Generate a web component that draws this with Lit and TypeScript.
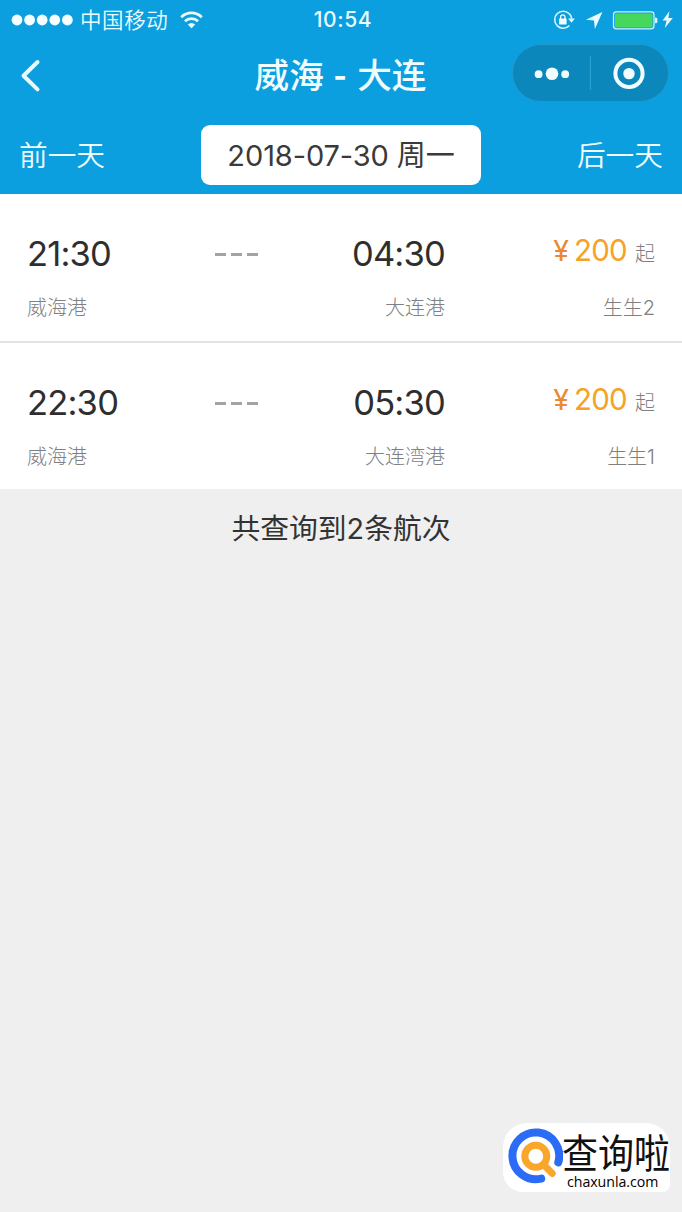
import { LitElement, html, svg, css } from "lit";
import { customElement, property } from "lit/decorators.js";

interface Sailing {
  depart: string;
  arrive: string;
  from: string;
  to: string;
  price: string;
  ship: string;
}

const sailings: Sailing[] = [
  { depart: "21:30", arrive: "04:30", from: "威海港", to: "大连港", price: "200", ship: "生生2" },
  { depart: "22:30", arrive: "05:30", from: "威海港", to: "大连湾港", price: "200", ship: "生生1" },
];

function dot(cx: number) {
  return svg`<circle cx=${cx} cy="6" r="5.4" />`;
}

@customElement("status-bar")
class StatusBar extends LitElement {
  static styles = css`
    :host {
      display: grid;
      grid-template-columns: 1fr auto 1fr;
      align-items: center;
      height: 38px;
      padding: 0 7px 0 11px;
      color: #eafcff;
    }
    .left,
    .right {
      display: flex;
      align-items: center;
    }
    .right {
      justify-content: flex-end;
    }
    .carrier {
      font-size: 21.5px;
      font-weight: 350;
      line-height: 38px;
      margin: 0 12px 0 7px;
      letter-spacing: 0.6px;
    }
    .clock {
      font-size: 21px;
      font-weight: 500;
      line-height: 38px;
      padding-top: 1px;
      letter-spacing: 0.6px;
    }
    svg {
      display: block;
    }
  `;

  render() {
    return html`
      <div class="left">
        <svg width="62" height="12" viewBox="0 0 62 12" fill="#f4feff">
          ${[0, 1, 2, 3, 4].map((i) => dot(6 + i * 12.6))}
        </svg>
        <span class="carrier">中国移动</span>
        <svg width="23" height="18" viewBox="0 0 23 18" fill="none" stroke="#eafcff" stroke-width="2.7">
          <path d="M1.2 6.2a14.6 14.6 0 0 1 20.6 0" />
          <path d="M5 10.3a9.2 9.2 0 0 1 13 0" />
          <path d="M11.5 17.3 7.8 13.6a5.3 5.3 0 0 1 7.4 0z" fill="#eafcff" stroke="none" />
        </svg>
      </div>
      <div class="clock">10:54</div>
      <div class="right">
        <svg width="122" height="24" viewBox="553 6.5 122 24">
          <path d="M569.2 12.2A8.5 8.5 0 1 0 569.4 24" fill="none" stroke="#d9f6ff" stroke-width="1.6" />
          <path d="M569.2 12.2a8.6 8.6 0 0 1 2.6 5" fill="none" stroke="#d9f6ff" stroke-width="1.6" />
          <path d="M568 17h7l-3.5 4.2z" fill="#d9f6ff" />
          <rect x="559" y="16.9" width="7.6" height="6" rx=".6" fill="#f4feff" />
          <path d="M560.6 17.4v-1.8a2.2 2.2 0 0 1 4.4 0v1.8" fill="none" stroke="#f4feff" stroke-width="1.3" />
          <path d="M602.4 10.4 586 18.2l8 .7.9 8.6z" fill="#eafcff" />
          <rect x="613.5" y="10.4" width="40.5" height="17" rx="2.8" fill="none" stroke="#d0f2ff" stroke-width="1.3" />
          <rect x="615" y="11.9" width="37.5" height="14" rx="1.4" fill="#45d85c" />
          <path d="M655 16h.8q1.6 0 1.6 1.6v2.6q0 1.6-1.6 1.6h-.8z" fill="#d0f2ff" />
          <path d="M669.4 9.8 662.6 19h4l-1.8 7.6 8-10h-4.4z" fill="#eafcff" />
        </svg>
      </div>
    `;
  }
}

@customElement("sailing-row")
class SailingRow extends LitElement {
  @property({ attribute: false }) sailing!: Sailing;

  static styles = css`
    :host {
      display: grid;
      grid-template-columns: 112px 1fr 112px 210px;
      grid-template-rows: 42px 30px;
      row-gap: 18px;
      box-sizing: border-box;
      padding: 39px 27px 0 27px;
      background: #fff;
    }
    .time {
      font-size: 34.5px;
      line-height: 42px;
      color: #2e2e2e;
      white-space: nowrap;
      letter-spacing: -0.8px;
    }
    .end {
      text-align: right;
    }
    .dash {
      display: flex;
      align-items: center;
      gap: 4.8px;
      padding: 1px 0 0 76px;
    }
    .dash i {
      width: 11.3px;
      height: 3px;
      background: #a3a3a3;
    }
    .price {
      display: flex;
      justify-content: flex-end;
      align-items: baseline;
      line-height: 34px;
      white-space: nowrap;
    }
    .yen {
      font-size: 28.5px;
      font-weight: 400;
      color: #ec8732;
      margin-right: 5px;
    }
    .amount {
      font-size: 29.5px;
      color: #f5a327;
      margin-right: 8px;
      letter-spacing: -0.7px;
    }
    .unit,
    .name {
      font-size: 20px;
      font-weight: 300;
      color: #808080;
    }
    .name {
      line-height: 30px;
    }
    .wide {
      grid-column: span 2;
    }
  `;

  render() {
    const s = this.sailing;
    return html`
      <div class="time">${s.depart}</div>
      <div class="dash"><i></i><i></i><i></i></div>
      <div class="time end">${s.arrive}</div>
      <div class="price">
        <span class="yen">¥</span><span class="amount">${s.price}</span><span class="unit">起</span>
      </div>
      <div class="name">${s.from}</div>
      <div class="name end wide">${s.to}</div>
      <div class="name end">${s.ship}</div>
    `;
  }
}

@customElement("app-root")
class AppRoot extends LitElement {
  static styles = css`
    :host {
      display: flex;
      flex-direction: column;
      position: relative;
      box-sizing: border-box;
      width: 682px;
      height: 1212px;
      overflow: hidden;
      background: #efefef;
      font-family: Inter, "Noto Sans CJK SC", sans-serif;
      color: #333;
    }
    .header {
      height: 194px;
      background: #0b9fdf;
      color: #f0fdff;
    }
    .nav {
      display: grid;
      grid-template-columns: 1fr auto 1fr;
      align-items: center;
      height: 72px;
      padding: 0 13px;
    }
    .back {
      margin: 2px 0 0 6px;
    }
    .title {
      font-size: 34.6px;
      font-weight: 500;
      line-height: 70px;
      margin: 2px 1px 0 0;
      white-space: nowrap;
      word-spacing: -0.5px;
    }
    .hyphen {
      display: inline-block;
      font-weight: 600;
      transform: scaleX(0.85);
    }
    .capsule {
      display: flex;
      align-items: center;
      justify-self: end;
      box-sizing: border-box;
      width: 157px;
      height: 58px;
      margin-top: -2px;
      border: 1.5px solid #2298cb;
      border-radius: 29px;
      background: #0c87bb;
    }
    .days {
      display: grid;
      grid-template-columns: 1fr 280px 1fr;
      align-items: center;
      margin-top: 15px;
      padding: 0 19px;
      font-size: 28.7px;
      font-weight: 350;
      line-height: 58px;
    }
    .next {
      text-align: right;
    }
    .side {
      padding-top: 2px;
    }
    .date {
      height: 60px;
      border-radius: 9px;
      background: #fff;
      color: #3a3a3a;
      font-size: 29px;
      font-weight: 400;
      line-height: 62px;
      text-align: center;
      white-space: nowrap;
      letter-spacing: -0.1px;
    }
    .first {
      height: 149px;
      border-bottom: 2px solid #e2e2e2;
    }
    .second {
      height: 146px;
    }
    .summary {
      padding-top: 19px;
      font-size: 28.8px;
      line-height: 42px;
      text-align: center;
      color: #333;
    }
    .mark {
      position: absolute;
      right: 12px;
      bottom: 20px;
      display: flex;
      width: 167px;
      height: 69px;
      border-radius: 24px 24px 8px 20px;
      background: #fff;
      color: #111;
    }
    .words {
      display: flex;
      flex-direction: column;
      margin-left: -1px;
    }
    .brand {
      height: 50px;
      font-size: 36px;
      line-height: 65px;
      transform: scaleY(1.1);
      transform-origin: 50% 100%;
      white-space: nowrap;
    }
    .site {
      padding: 1px 0 0 5px;
      font-family: "Open Sans", sans-serif;
      font-size: 14.2px;
      font-weight: 500;
      line-height: 16px;
      letter-spacing: -0.05px;
      color: #000;
    }
  `;

  render() {
    return html`
      <div class="header">
        <status-bar></status-bar>
        <div class="nav">
          <svg class="back" width="22" height="36" viewBox="0 0 22 36" fill="none" stroke="#e8fbff" stroke-width="4" stroke-linecap="round" stroke-linejoin="round">
            <path d="M18.5 5 4.5 18.7 18.5 32.4" />
          </svg>
          <div class="title">威海 <span class="hyphen">-</span> 大连</div>
          <div class="capsule">
            <svg width="154" height="55" viewBox="0 0 154 55" fill="#f0fdff">
              <circle cx="25.6" cy="28.2" r="3.9" />
              <circle cx="39" cy="27.8" r="6.3" />
              <circle cx="52.2" cy="28.2" r="3.9" />
              <rect x="76.8" y="10" width="1.3" height="34" fill="#2b9fd0" />
              <circle cx="116" cy="27.4" r="13.6" fill="none" stroke="#f0fdff" stroke-width="4" />
              <circle cx="116" cy="27.6" r="5.7" />
            </svg>
          </div>
        </div>
        <div class="days">
          <div class="side">前一天</div>
          <div class="date">2018-07-30 周一</div>
          <div class="side next">后一天</div>
        </div>
      </div>
      <sailing-row class="first" .sailing=${sailings[0]}></sailing-row>
      <sailing-row class="second" .sailing=${sailings[1]}></sailing-row>
      <div class="summary">共查询到2条航次</div>
      <div class="mark">
        <svg width="60" height="69" viewBox="503 1123 60 69" fill="none" stroke-linecap="round">
          <path d="M541.2 1178.6A23.4 23.4 0 1 1 558.3 1162.4" stroke="#2a6cf6" stroke-width="8" />
          <circle cx="535.8" cy="1156.3" r="11" stroke="#f9a72b" stroke-width="7" />
          <path d="M544.5 1165.5 552.2 1173.4" stroke="#f9a72b" stroke-width="7" />
        </svg>
        <div class="words">
          <div class="brand">查询啦</div>
          <div class="site">chaxunla.com</div>
        </div>
      </div>
    `;
  }
}
